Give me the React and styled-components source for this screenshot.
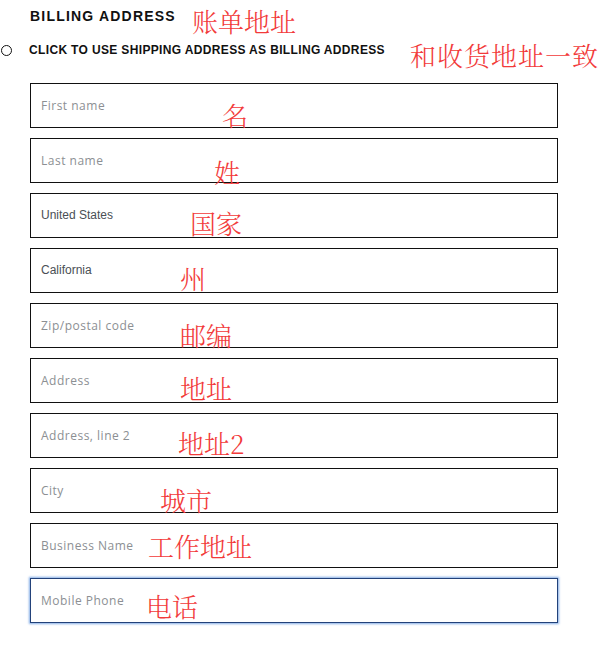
import { createGlobalStyle, styled } from 'styled-components';

const GlobalStyle = createGlobalStyle`
  html, body {
    margin: 0;
    padding: 0;
    background: #fff;
  }
  body {
    font-family: "Liberation Sans", Arial, sans-serif;
  }
`;

const fields = [
  { label: 'First name', note: '名', noteX: 222, noteY: 100 },
  { label: 'Last name', note: '姓', noteX: 214, noteY: 157 },
  { label: 'United States', note: '国家', noteX: 190, noteY: 208, filled: true },
  { label: 'California', note: '州', noteX: 180, noteY: 263, filled: true },
  { label: 'Zip/postal code', note: '邮编', noteX: 180, noteY: 320 },
  { label: 'Address', note: '地址', noteX: 180, noteY: 373 },
  { label: 'Address, line 2', note: '地址2', noteX: 178, noteY: 428 },
  { label: 'City', note: '城市', noteX: 160, noteY: 485 },
  { label: 'Business Name', note: '工作地址', noteX: 148, noteY: 531 },
  { label: 'Mobile Phone', note: '电话', noteX: 146, noteY: 591, focused: true },
];

const App = () => {
  return (
    <Page>
      <GlobalStyle />
      <Title>BILLING ADDRESS</Title>
      <OptionRow>
        <Radio />
        <OptionText>CLICK TO USE SHIPPING ADDRESS AS BILLING ADDRESS</OptionText>
      </OptionRow>
      <Form>
        {fields.map((item) => (
          <Field key={item.label} $focused={item.focused}>
            <FieldText $filled={item.filled}>{item.label}</FieldText>
          </Field>
        ))}
      </Form>

      <Note style={{ left: 192, top: 6 }}>账单地址</Note>
      <Note style={{ left: 410, top: 40, letterSpacing: '1px' }}>和收货地址一致</Note>
      {fields.map((item) => (
        <Note key={item.note} style={{ left: item.noteX, top: item.noteY }}>
          {item.note}
        </Note>
      ))}
    </Page>
  );
};

export default App;

const Page = styled.div`
  position: relative;
  width: 603px;
  height: 655px;
  padding-top: 8px;
  box-sizing: border-box;
`;

const Title = styled.h2`
  margin: 0 0 0 30px;
  font-family: "Liberation Sans", Arial, sans-serif;
  font-size: 14px;
  font-weight: 700;
  letter-spacing: 1.2px;
  line-height: 16px;
  color: #111;
`;

const OptionRow = styled.div`
  display: flex;
  align-items: center;
  gap: 17px;
  margin-top: 19px;
  padding-left: 1px;
  height: 14px;
`;

const Radio = styled.span`
  display: block;
  width: 11px;
  height: 11px;
  box-sizing: border-box;
  border: 1px solid #111;
  border-radius: 50%;
`;

const OptionText = styled.span`
  font-family: "Liberation Sans", Arial, sans-serif;
  font-size: 12px;
  font-weight: 700;
  color: #111;
  letter-spacing: 0.35px;
`;

const Form = styled.div`
  display: flex;
  flex-direction: column;
  gap: 10px;
  margin: 26px 0 0 30px;
  width: 528px;
`;

const Field = styled.div`
  display: flex;
  align-items: center;
  height: 45px;
  box-sizing: border-box;
  padding-left: 10px;
  border: 1px solid ${({ $focused }) => ($focused ? '#23427a' : '#111')};
  box-shadow: ${({ $focused }) => ($focused ? '0 0 2px 1px rgba(80, 140, 220, 0.7)' : 'none')};
`;

const FieldText = styled.span`
  font-family: ${({ $filled }) =>
    $filled ? '"Liberation Sans", Arial, sans-serif' : '"Open Sans", sans-serif'};
  font-size: 12px;
  letter-spacing: ${({ $filled }) => ($filled ? '0' : '0.5px')};
  color: ${({ $filled }) => ($filled ? '#4a4f55' : '#8c8f93')};
  margin-top: -1px;
`;

const Note = styled.span`
  position: absolute;
  font-family: "Noto Serif CJK SC", "Noto Sans CJK SC", serif;
  font-weight: 300;
  font-size: 26px;
  line-height: 30px;
  color: #f23a3a;
  white-space: nowrap;
`;
